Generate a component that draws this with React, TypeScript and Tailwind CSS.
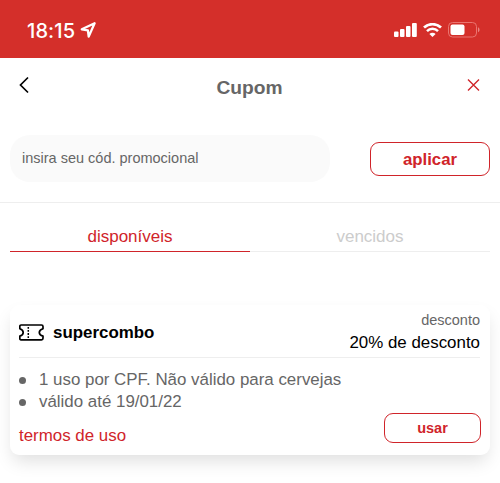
function StatusBar() {
  return (
    <div className="h-[58px] bg-[#d42f2a] flex items-center justify-between pl-[27px] pr-[20px] pt-[2px] text-white">
      <div className="flex items-center gap-[5px]">
        <p className="pt-[1px] font-['Inter',sans-serif] font-medium text-[20px] leading-6 tracking-[0.1px]">18:15</p>
        <svg width="16" height="16" viewBox="0 0 16 16" fill="none">
          <path
            d="M14.6 1.2 1.8 7.3l6.1 1.1.8 6.2z"
            stroke="white"
            strokeWidth="2.3"
            strokeLinejoin="round"
          />
        </svg>
      </div>
      <div className="flex items-center gap-[6px]">
        <svg width="23" height="14" viewBox="0 0 23 14" fill="white">
          <rect x="0" y="8.5" width="4.5" height="5.5" rx="1" />
          <rect x="6" y="6" width="4.5" height="8" rx="1" />
          <rect x="12" y="3" width="4.5" height="11" rx="1" />
          <rect x="18" y="0" width="4.8" height="14" rx="1" />
        </svg>
        <svg width="19" height="14" viewBox="0 0 19 14" fill="none" stroke="white">
          <path d="M1 4.6a12.3 12.3 0 0 1 17 0" strokeWidth="2.7" />
          <path d="M4 8.1a7.8 7.8 0 0 1 11 0" strokeWidth="2.5" />
          <path d="M9.5 14 6.4 11a4.4 4.4 0 0 1 6.2 0z" fill="white" stroke="none" />
        </svg>
        <svg width="32" height="16" viewBox="0 0 32 16" fill="none">
          <rect x="0.5" y="0.5" width="28" height="14.5" rx="4" stroke="#ea7570" />
          <rect x="2.5" y="2.5" width="14" height="10.5" rx="2" fill="white" />
          <path d="M30 5.3c2 .8 2 4.2 0 5z" fill="#ea8580" />
        </svg>
      </div>
    </div>
  );
}

function Header() {
  return (
    <header className="h-[58px] flex items-center justify-between pl-[19px] pr-[20px]">
      <svg width="14" height="18" viewBox="0 0 14 18" fill="none" className="-mt-[4px]">
        <path d="M9 1.5 1.5 9 9 16.5" stroke="black" strokeWidth="1.7" />
      </svg>
      <h1 className="pt-[2px] text-[19.2px] leading-6 font-bold text-[#666]">Cupom</h1>
      <svg width="14" height="14" viewBox="0 0 14 14" fill="none" className="-mt-[4px]">
        <path d="M2 1.5l11 11M13 1.5l-11 11" stroke="#d0242a" strokeWidth="1.4" />
      </svg>
    </header>
  );
}

function TicketIcon() {
  return (
    <svg width="25" height="17" viewBox="0 0 25 17" fill="none" stroke="black">
      <path
        d="M2 1h20.5q1.500 0 1.500 1.500v2.200q-3.700 1.200-3.700 3.700t3.700 3.700v2.200q0 1.500-1.500 1.500H2Q.8 15.800.8 14.500v-2.400q3.400-1.200 3.400-3.700T.8 4.700V2.500Q.8 1 2 1z"
        strokeWidth="1.7"
        strokeLinejoin="round"
      />
      <path d="M9.3 3v11" strokeWidth="1.5" strokeDasharray="1.8 1.25" />
    </svg>
  );
}

const rules = ["1 uso por CPF. Não válido para cervejas", "válido até 19/01/22"];

function CouponCard() {
  return (
    <div className="mx-[10px] mt-[53px] h-[150px] rounded-[9px] bg-white pl-[9px] pr-[10px] flex flex-col shadow-[0_9px_18px_-3px_rgba(0,0,0,0.13)]">
      <div className="h-[53px] flex justify-between border-b border-[#eee]">
        <div className="flex items-center gap-[9px] pt-[2px]">
          <TicketIcon />
          <p className="pt-[1px] font-bold text-[16.9px] leading-5">supercombo</p>
        </div>
        <div className="flex flex-col items-end pt-[5px]">
          <p className="text-[14.5px] leading-5 text-[#666]">desconto</p>
          <p className="pt-[1px] text-[16.9px] leading-6">20% de desconto</p>
        </div>
      </div>
      <ul className="pt-[11px] text-[16.9px] leading-[22px] text-[#666]">
        {rules.map((rule) => (
          <li key={rule} className="flex items-center gap-[13px]">
            <span className="size-[7px] rounded-full bg-[#666]" />
            {rule}
          </li>
        ))}
      </ul>
      <div className="flex justify-between items-start">
        <a className="mt-[13px] text-[16.9px] leading-5 text-[#d0242a]">termos de uso</a>
        <button className="-mr-[1px] h-[30px] w-[97px] rounded-[9px] border border-[#d0242a] pt-[2px] font-bold text-[14.5px] text-[#d0242a]">
          usar
        </button>
      </div>
    </div>
  );
}

export default function App() {
  return (
    <div className="h-[483px] bg-white text-black font-['Liberation_Sans',Arial,sans-serif] overflow-hidden">
      <StatusBar />
      <Header />
      <div className="h-[87px] px-[10px] pt-[19px] flex justify-between items-start border-b border-[#eee]">
        <input
          className="h-[47px] w-[320px] rounded-[20px] bg-[#fafafa] px-3 pb-[2px] text-[14.5px] placeholder:text-[#666]"
          placeholder="insira seu cód. promocional"
        />
        <button className="mt-[7px] h-[34px] w-[120px] rounded-[9px] border border-[#d0242a] pt-[1px] font-bold text-[16.8px] text-[#d0242a]">
          aplicar
        </button>
      </div>
      <div className="mx-[10px] h-[49px] flex text-center text-[17px] leading-5">
        <p className="flex-1 pt-[24px] border-b border-[#d0242a] text-[#d0242a]">disponíveis</p>
        <p className="flex-1 pt-[24px] border-b border-[#eee] text-[#ccc]">vencidos</p>
      </div>
      <CouponCard />
    </div>
  );
}
